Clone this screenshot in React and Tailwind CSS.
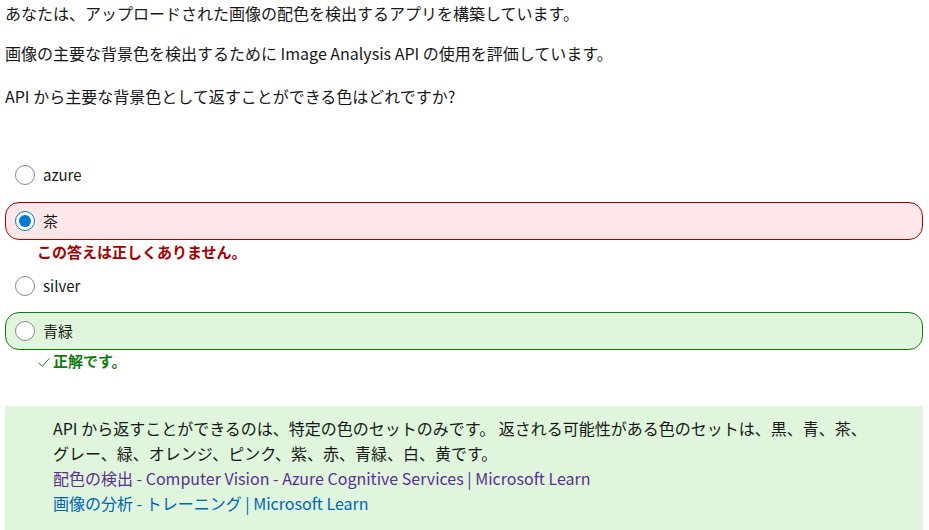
import React from 'react';

const options = [
  { label: 'azure', state: null, checked: false },
  { label: '茶', state: 'wrong', checked: true },
  { label: 'silver', state: null, checked: false },
  { label: '青緑', state: 'right', checked: false },
];

const Radio = ({ checked }) => (
  <span
    className={`flex h-[20px] w-[20px] shrink-0 items-center justify-center rounded-full border bg-white ${
      checked ? 'border-[#0078d4]' : 'border-[#8a8a8a]'
    }`}
  >
    {checked && <span className="h-[12px] w-[12px] rounded-full bg-[#0078d4]" />}
  </span>
);

const Option = ({ option }) => {
  const boxStyles = {
    wrong: 'border border-[#a80000] bg-[#fde7e9]',
    right: 'border border-[#107c10] bg-[#dff6dd]',
  };

  return (
    <div>
      <div
        className={`flex h-[38px] items-center gap-[8px] rounded-[14px] pl-[9px] ${
          boxStyles[option.state] || 'border border-transparent'
        }`}
      >
        <Radio checked={option.checked} />
        <span className="text-[15px] text-[#171717]">{option.label}</span>
      </div>
      {option.state === 'wrong' && (
        <p className="ml-[32px] h-[27px] pt-[1px] text-[15px] font-bold text-[#a80000]">
          この答えは正しくありません。
        </p>
      )}
      {option.state === 'right' && (
        <p className="ml-[32px] flex h-[27px] items-center gap-[2px] pb-[4px] text-[15px] font-bold text-[#107c10]">
          <svg width="14" height="14" viewBox="0 0 16 16" fill="none" stroke="currentColor" strokeWidth="1.1">
            <path d="M2 9 L6 13 L14 4" />
          </svg>
          正解です。
        </p>
      )}
    </div>
  );
};

export default function App() {
  return (
    <div
      className="h-[530px] w-[929px] overflow-hidden bg-white px-[5px] text-[#171717]"
      style={{ fontFamily: '"Noto Sans CJK JP", "Noto Sans", sans-serif' }}
    >
      {/* Question */}
      <div className="text-[16px] leading-[26px]">
        <p>あなたは、アップロードされた画像の配色を検出するアプリを構築しています。</p>
        <p className="mt-[14px]">画像の主要な背景色を検出するために Image Analysis API の使用を評価しています。</p>
        <p className="mt-[17px]">API から主要な背景色として返すことができる色はどれですか?</p>
      </div>

      {/* Options */}
      <div className="mt-[47px] mr-[1px] flex flex-col">
        <div className="h-[46px]">
          <Option option={options[0]} />
        </div>
        <div className="h-[65px]">
          <Option option={options[1]} />
        </div>
        <div className="h-[45px]">
          <Option option={options[2]} />
        </div>
        <Option option={options[3]} />
      </div>

      {/* Feedback */}
      <div className="mt-[29px] mr-[1px] bg-[#dff6dd] pb-[20px] pl-[48px] pt-[10px] text-[16px] leading-[25px]">
        <p>
          API から返すことができるのは、特定の色のセットのみです。 返される可能性がある色のセットは、黒、青、茶、
          <br />
          グレー、緑、オレンジ、ピンク、紫、赤、青緑、白、黄です。
        </p>
        <a href="#" className="block text-[#5c2e91]">
          配色の検出 - Computer Vision - Azure Cognitive Services | Microsoft Learn
        </a>
        <a href="#" className="block text-[#0065b3]">
          画像の分析 - トレーニング | Microsoft Learn
        </a>
      </div>
    </div>
  );
}
